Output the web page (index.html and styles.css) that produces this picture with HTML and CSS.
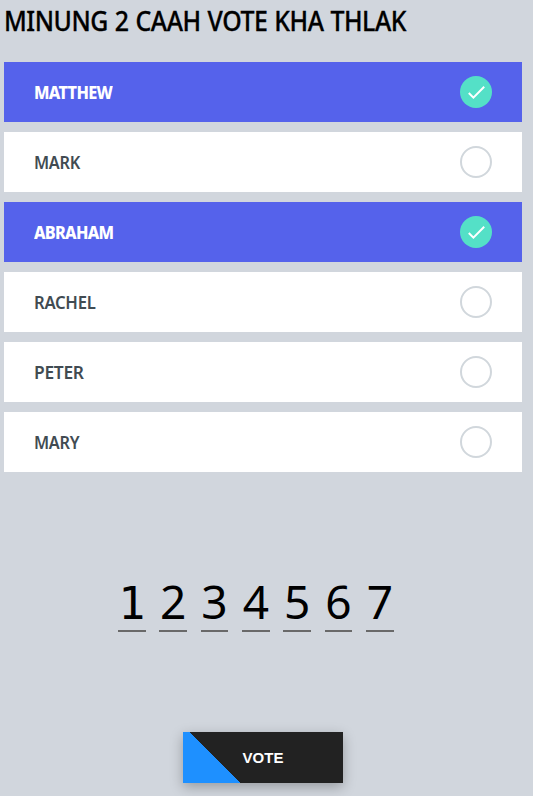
FILE: index.html
```html
<!DOCTYPE html>
<html lang="en">
<head>
<meta charset="utf-8">
<title>Vote</title>
<link rel="stylesheet" href="styles.css">
</head>
<body>
<h1>MINUNG 2 CAAH VOTE KHA THLAK</h1>
<div class="options">
<label class="option selected"><span class="name">MATTHEW</span><span class="mark"><svg viewBox="0 0 32 32"><path d="M8.8 17l4.6 4.6L24.2 10.8"/></svg></span></label>
<label class="option"><span class="name">MARK</span><span class="mark"></span></label>
<label class="option selected"><span class="name">ABRAHAM</span><span class="mark"><svg viewBox="0 0 32 32"><path d="M8.8 17l4.6 4.6L24.2 10.8"/></svg></span></label>
<label class="option"><span class="name medium">RACHEL</span><span class="mark"></span></label>
<label class="option"><span class="name wide">PETER</span><span class="mark"></span></label>
<label class="option"><span class="name">MARY</span><span class="mark"></span></label>
</div>
<div class="code"><span class="one">1</span><span>2</span><span>3</span><span>4</span><span>5</span><span>6</span><span>7</span></div>
<button class="vote">VOTE</button>
</body>
</html>
```
FILE: styles.css
```css
* { box-sizing: border-box; }
body {
  margin: 0;
  height: 796px;
  padding: 0 11px 0 4px;
  background: #d1d6dd;
  font-family: "Noto Sans", sans-serif;
  overflow: hidden;
}
h1 {
  margin: 0;
  height: 62px;
  font-size: 27px;
  line-height: 42px;
  font-weight: 500;
  letter-spacing: -0.5px;
  word-spacing: 1px;
  white-space: nowrap;
  transform: scaleX(.921);
  transform-origin: left;
  -webkit-text-stroke: .3px #000;
}
.options { display: flex; flex-direction: column; gap: 10px; }
.option {
  height: 60px;
  padding: 0 30px;
  display: flex;
  align-items: center;
  justify-content: space-between;
  background: #fff;
  color: #414b52;
  font-size: 18px;
  font-weight: 600;
  letter-spacing: -0.3px;
}
.name { transform: scaleX(.905); transform-origin: left; }
.name.medium { transform: scaleX(.925); }
.name.wide { transform: scaleX(.965); }
.selected { background: #5562eb; color: #fff; font-weight: 800; letter-spacing: -0.8px; }
.mark {
  width: 32px;
  height: 32px;
  border: 2px solid #d1d7dc;
  border-radius: 50%;
}
.selected .mark { border: 0; background: #54e0c7; }
.mark svg { display: block; width: 32px; height: 32px; fill: none; stroke: #fff; stroke-width: 2; }
.code { display: flex; gap: 13.7px; margin: 104px 0 0 114px; }
.code span {
  width: 27.65px;
  height: 56px;
  border-bottom: 2px solid #696969;
  font-size: 46px;
  line-height: 51px;
  text-align: center;
}
.code .one { font-family: "DejaVu Sans Mono", monospace; font-size: 45px; line-height: 56px; }
.vote {
  display: block;
  width: 160px;
  height: 51px;
  margin: 100px 0 0 179px;
  padding: 0;
  border: 0;
  color: #fff;
  background: linear-gradient(45deg, dodgerblue 0 40.3px, #222 40.8px);
  box-shadow: 0 4px 12px rgba(0, 0, 0, .28);
  font: 700 15px "Liberation Sans", sans-serif;
}
```
